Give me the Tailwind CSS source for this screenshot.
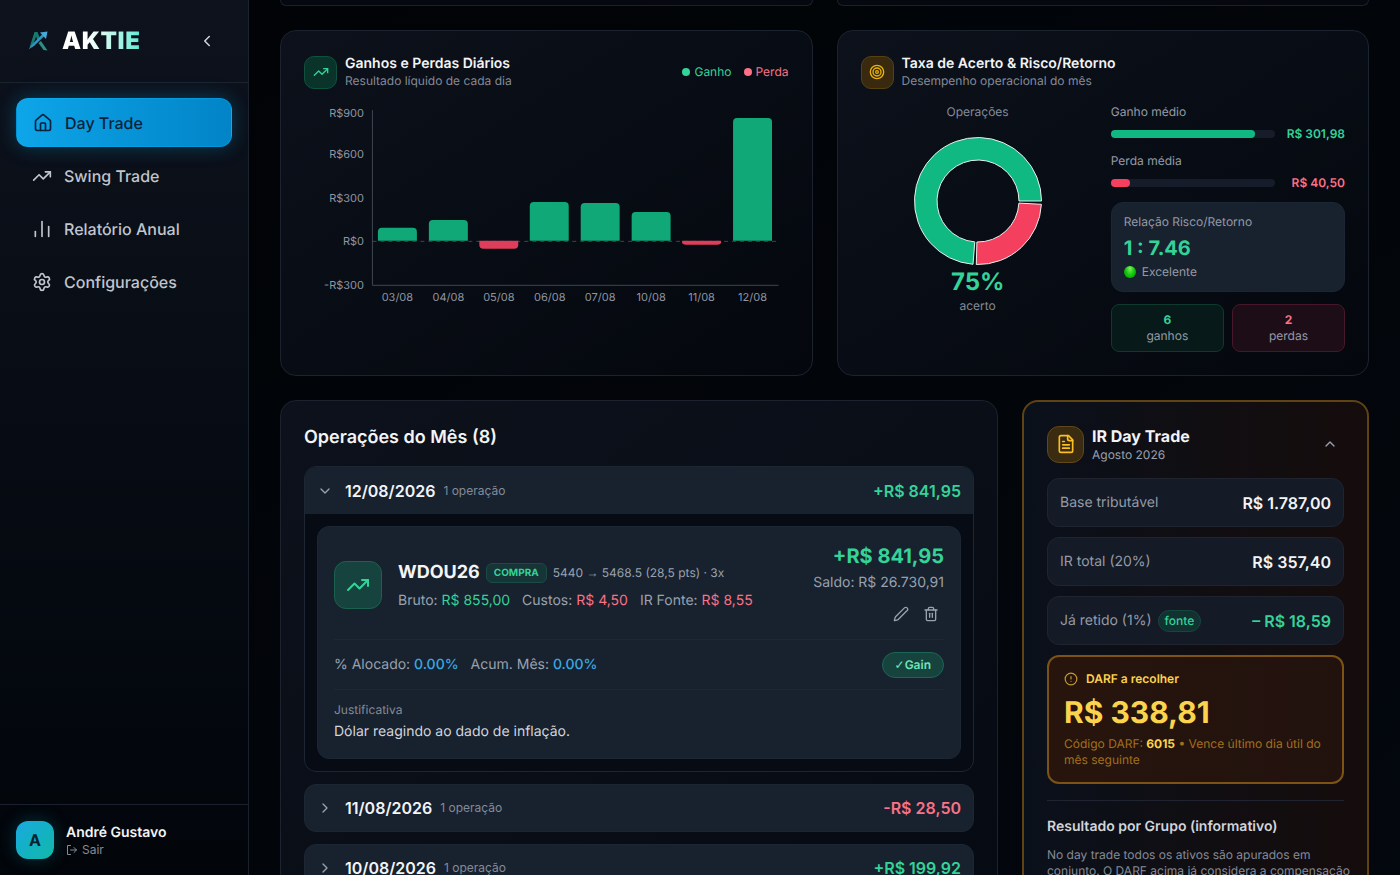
<!DOCTYPE html>
<html lang="pt-BR">
<head>
    <meta charset="UTF-8">
    <meta name="viewport" content="width=device-width, initial-scale=1.0">
    <title>AKTIE - Day Trade</title>
    <script src="https://cdn.jsdelivr.net/npm/@tailwindcss/browser@4"></script>
</head>
<body class="h-screen flex overflow-hidden bg-[#02050a] bg-linear-to-br from-[#010306] via-[#020509] to-[#03070e] font-[Inter,'Liberation_Sans',sans-serif] [text-rendering:geometricPrecision] text-gray-100">
    <!-- Sidebar -->
    <aside class="w-[249px] shrink-0 flex flex-col border-r border-[#1b222d] bg-linear-to-b from-[#0d121c] via-[#070c14] to-[#02050a]">
        <div class="h-[83px] flex items-center justify-between border-b border-[#1b232e] pl-7 pr-8">
            <div class="flex items-center gap-3">
                <svg class="w-[22px] h-[22px]" viewBox="0 0 22 22" fill="none">
                    <path d="M1.500 17.500 6.500 2 9.500 2 12 8.500 9.800 11 8 6.500 4.500 17Z" fill="#147a72"/>
                    <path d="M13 11 19.500 20.500 15.500 20 10.500 13Z" fill="#2a8f84"/>
                    <path d="M.5 19.500 4.500 14 14.500 4 16.500 6 6.500 15.500Z" fill="#2f95bd"/>
                    <path d="M12 2.500 19.500 1.500 18 9Z" fill="#45aadb"/>
                </svg>
                <span class="text-2xl font-black tracking-wide bg-linear-to-r from-white from-30% to-[#5eead4] bg-clip-text text-transparent">AKTIE</span>
            </div>
            <button type="button" aria-label="Recolher menu" class="text-gray-300">
                <svg class="w-[18px] h-[18px]" viewBox="0 0 24 24" fill="none" stroke="currentColor" stroke-width="2" stroke-linecap="round" stroke-linejoin="round"><path d="m15 18-6-6 6-6"/></svg>
            </button>
        </div>

        <nav class="flex-1 flex flex-col gap-1 px-4 pt-[15px]">
            <a href="#" class="h-[49px] flex items-center gap-3 rounded-xl px-4 font-medium text-[#06223c] bg-linear-to-r from-[#0ea5e9] to-[#0284c7] border border-sky-400/30 shadow-[0_0_20px_rgba(14,165,233,0.3)]">
                <svg class="w-5 h-5" viewBox="0 0 24 24" fill="none" stroke="currentColor" stroke-width="2" stroke-linecap="round" stroke-linejoin="round"><path d="M15 21v-8a1 1 0 0 0-1-1h-4a1 1 0 0 0-1 1v8"/><path d="M3 10a2 2 0 0 1 .709-1.528l7-5.999a2 2 0 0 1 2.582 0l7 5.999A2 2 0 0 1 21 10v9a2 2 0 0 1-2 2H5a2 2 0 0 1-2-2z"/></svg>
                Day Trade
            </a>
            <a href="#" class="h-[49px] flex items-center gap-3 rounded-xl px-4 font-medium text-[#c0c5ce]">
                <svg class="w-5 h-5" viewBox="0 0 24 24" fill="none" stroke="currentColor" stroke-width="2" stroke-linecap="round" stroke-linejoin="round"><path d="M22 7 13.500 15.500 8.500 10.500 2 17"/><path d="M16 7h6v6"/></svg>
                Swing Trade
            </a>
            <a href="#" class="h-[49px] flex items-center gap-3 rounded-xl px-4 font-medium text-[#c0c5ce]">
                <svg class="w-5 h-5" viewBox="0 0 24 24" fill="none" stroke="currentColor" stroke-width="2" stroke-linecap="round" stroke-linejoin="round"><path d="M4 21v-6"/><path d="M12 21V3"/><path d="M20 21V9"/></svg>
                Relatório Anual
            </a>
            <a href="#" class="h-[49px] flex items-center gap-3 rounded-xl px-4 font-medium text-[#c0c5ce]">
                <svg class="w-5 h-5" viewBox="0 0 24 24" fill="none" stroke="currentColor" stroke-width="2" stroke-linecap="round" stroke-linejoin="round"><path d="M9.671 4.136a2.340 2.340 0 0 1 4.659 0 2.340 2.340 0 0 0 3.319 1.915 2.340 2.340 0 0 1 2.330 4.033 2.340 2.340 0 0 0 0 3.831 2.340 2.340 0 0 1-2.330 4.033 2.340 2.340 0 0 0-3.319 1.915 2.340 2.340 0 0 1-4.659 0 2.340 2.340 0 0 0-3.320-1.915 2.340 2.340 0 0 1-2.330-4.033 2.340 2.340 0 0 0 0-3.831A2.340 2.340 0 0 1 6.350 6.051a2.340 2.340 0 0 0 3.319-1.915"/><circle cx="12" cy="12" r="3"/></svg>
                Configurações
            </a>
        </nav>

        <div class="h-[71px] flex items-center gap-3 border-t border-[#1b222d] px-4">
            <div class="w-[38px] h-[38px] rounded-xl flex items-center justify-center font-bold text-[#06222f] bg-linear-to-br from-[#1ba9e0] to-[#14b8a6] shadow-[0_0_18px_rgba(20,184,200,0.25)]">A</div>
            <div>
                <p class="text-sm leading-[19px] font-semibold text-gray-100">André Gustavo</p>
                <button type="button" class="flex items-center gap-1 text-xs text-[#848b98]">
                    <svg class="w-3 h-3" viewBox="0 0 24 24" fill="none" stroke="currentColor" stroke-width="2" stroke-linecap="round" stroke-linejoin="round"><path d="m16 17 5-5-5-5"/><path d="M21 12H9"/><path d="M9 21H3V3h6"/></svg>
                    Sair
                </button>
            </div>
        </div>
    </aside>

    <!-- Content -->
    <main class="flex-1 min-w-0 overflow-hidden px-[31px]">
        <div class="grid grid-cols-2 gap-6 mb-6">
            <div class="h-[6px] rounded-b-2xl border border-t-0 border-[#1a212c] bg-[#05090f]"></div>
            <div class="h-[6px] rounded-b-2xl border border-t-0 border-[#1a212c] bg-[#05090f]"></div>
        </div>

        <div class="grid grid-cols-2 gap-6 mb-6">
            <!-- Daily gains and losses -->
            <section class="rounded-2xl border border-[#1c232e] bg-linear-to-br from-[#0c111b] via-[#080c14] to-[#04070d] p-[23px] pt-6">
                <div class="flex items-center justify-between">
                    <div class="flex items-center gap-2">
                        <div class="w-[33px] h-[33px] rounded-[10px] border border-[#10513f] bg-[#0a3429] flex items-center justify-center text-[#34d399]">
                            <svg class="w-4 h-4" viewBox="0 0 24 24" fill="none" stroke="currentColor" stroke-width="2" stroke-linecap="round" stroke-linejoin="round"><path d="M22 7 13.500 15.500 8.500 10.500 2 17"/><path d="M16 7h6v6"/></svg>
                        </div>
                        <div>
                            <h2 class="text-sm leading-[18px] font-semibold">Ganhos e Perdas Diários</h2>
                            <p class="text-xs text-[#848b98]">Resultado líquido de cada dia</p>
                        </div>
                    </div>
                    <div class="flex gap-3 text-xs">
                        <span class="flex items-center gap-1 text-[#34d399]"><span class="w-2 h-2 rounded-full bg-[#34d399]"></span>Ganho</span>
                        <span class="flex items-center gap-1 text-[#fb7185]"><span class="w-2 h-2 rounded-full bg-[#fb7185]"></span>Perda</span>
                    </div>
                </div>
                <svg class="w-full mt-[15px]" viewBox="0 0 485 206" font-size="11" fill="#8f96a3">
                    <g text-anchor="end">
                        <text x="60" y="13">R$900</text>
                        <text x="60" y="54">R$600</text>
                        <text x="60" y="98">R$300</text>
                        <text x="60" y="141">R$0</text>
                        <text x="60" y="185">-R$300</text>
                    </g>
                    <g text-anchor="middle">
                        <text x="93.500" y="197">03/08</text>
                        <text x="144.500" y="197">04/08</text>
                        <text x="195" y="197">05/08</text>
                        <text x="246" y="197">06/08</text>
                        <text x="296.500" y="197">07/08</text>
                        <text x="347.500" y="197">10/08</text>
                        <text x="398" y="197">11/08</text>
                        <text x="449" y="197">12/08</text>
                    </g>
                    <path d="M68.500 6V181.500H475" fill="none" stroke="#3f4650"/>
                    <g fill="#10a877">
                        <path d="M74 137v-9q0-4 4-4h31q4 0 4 4v9z"/>
                        <path d="M125 137v-17q0-4 4-4h31q4 0 4 4v17z"/>
                        <path d="M226 137v-35q0-4 4-4h31q4 0 4 4v35z"/>
                        <path d="M277 137v-34q0-4 4-4h31q4 0 4 4v34z"/>
                        <path d="M328 137v-25q0-4 4-4h31q4 0 4 4v25z"/>
                        <path d="M429.500 137v-119q0-4 4-4h31q4 0 4 4v119z"/>
                    </g>
                    <g fill="#de3d5b">
                        <path d="M175.500 137h39v4q0 4-4 4h-31q-4 0-4-4z"/>
                        <path d="M378.500 137h39v1.500q0 2.500-4 2.500h-31q-4 0-4-2.500z"/>
                    </g>
                    <path d="M68.500 137.500H475" fill="none" stroke="#6b7280" stroke-opacity=".55" stroke-dasharray="4 4"/>
                </svg>
            </section>

            <!-- Hit rate -->
            <section class="rounded-2xl border border-[#1c232e] bg-linear-to-br from-[#0c111b] via-[#080c14] to-[#04070d] p-[23px] pt-6">
                <div class="flex items-center gap-2 mb-[15px]">
                    <div class="w-[33px] h-[33px] rounded-[10px] border border-[#57410f] bg-[#392a0f] flex items-center justify-center text-[#eab308]">
                        <svg class="w-4 h-4" viewBox="0 0 24 24" fill="none" stroke="currentColor" stroke-width="2"><circle cx="12" cy="12" r="10"/><circle cx="12" cy="12" r="6"/><circle cx="12" cy="12" r="2"/></svg>
                    </div>
                    <div>
                        <h2 class="text-sm leading-[18px] font-semibold">Taxa de Acerto &amp; Risco/Retorno</h2>
                        <p class="text-xs text-[#848b98]">Desempenho operacional do mês</p>
                    </div>
                </div>
                <div class="grid grid-cols-2 gap-4">
                    <div class="flex flex-col items-center text-xs text-[#848b98]">
                        <p>Operações</p>
                        <svg class="w-[130px] h-[130px] mt-4" viewBox="0 0 130 130" stroke="#e8f0ee" stroke-width="1">
                            <path fill="#10b981" d="M128.500 65A63.500 63.500 0 1 0 60 128.300L61.800 105.900A41 41 0 1 1 106 65Z"/>
                            <path fill="#f43f5e" d="M63.300 128.500A63.500 63.500 0 0 0 128.400 68.300L105.900 67.100A41 41 0 0 1 63.900 106Z"/>
                        </svg>
                        <p class="text-2xl font-bold text-[#34d399]">75%</p>
                        <p>acerto</p>
                    </div>
                    <div class="text-xs text-[#949ba7]">
                        <p class="mb-1.5">Ganho médio</p>
                        <div class="flex items-center justify-between mb-[11px]">
                            <div class="h-2 w-[164px] rounded-full bg-[#171c2a]"><div class="h-2 rounded-full bg-[#10b981]" style="width:88%"></div></div>
                            <span class="font-semibold text-[#34d399]">R$ 301,98</span>
                        </div>
                        <p class="mb-1.5">Perda média</p>
                        <div class="flex items-center justify-between mb-[11px]">
                            <div class="h-2 w-[164px] rounded-full bg-[#171c2a]"><div class="h-2 rounded-full bg-[#f43f5e]" style="width:12%"></div></div>
                            <span class="font-semibold text-[#fb7185]">R$ 40,50</span>
                        </div>
                        <div class="rounded-xl border border-[#1c2634] bg-[#18212e] px-3 py-[11px] mb-3">
                            <p>Relação Risco/Retorno</p>
                            <p class="text-xl font-bold text-[#34d399] mt-1">1 : 7.46</p>
                            <p class="flex items-center gap-1.5 mt-0.5"><span class="w-3 h-3 rounded-full bg-radial-[at_50%_20%] from-[#7cf35a] via-[#12c70c] to-[#068a06]"></span>Excelente</p>
                        </div>
                        <div class="grid grid-cols-2 gap-2 text-center">
                            <div class="rounded-lg border border-[#0e3a2e] bg-[#071a19] py-[7px]"><p class="font-bold text-[#34d399]">6</p><p>ganhos</p></div>
                            <div class="rounded-lg border border-[#46182a] bg-[#1d0d17] py-[7px]"><p class="font-bold text-[#fb7185]">2</p><p>perdas</p></div>
                        </div>
                    </div>
                </div>
            </section>
        </div>

        <div class="grid grid-cols-3 gap-6">
            <!-- Operations of the month -->
            <section class="col-span-2 rounded-2xl border border-[#1c232e] bg-linear-to-br from-[#0c111b] via-[#090e17] to-[#060a12] p-[23px] pt-6">
                <h2 class="text-lg leading-[26px] font-semibold mb-[15px]">Operações do Mês (8)</h2>

                <div class="rounded-xl border border-[#1d2632] bg-[#070b13] overflow-hidden mb-3">
                    <button type="button" class="w-full h-[47px] flex items-center px-3 bg-[#18212e] text-left">
                        <svg class="w-4 h-4 text-gray-400" viewBox="0 0 24 24" fill="none" stroke="currentColor" stroke-width="2" stroke-linecap="round" stroke-linejoin="round"><path d="m6 9 6 6 6-6"/></svg>
                        <span class="ml-3 font-semibold">12/08/2026</span>
                        <span class="ml-2 text-xs text-[#848b98]">1 operação</span>
                        <span class="ml-auto font-semibold text-[#34d399]">+R$ 841,95</span>
                    </button>
                    <div class="p-3">
                        <article class="rounded-xl border border-[#1d2734] bg-[#18212e] p-4 pt-[15px]">
                            <div class="flex items-center gap-4">
                                <div class="w-12 h-12 rounded-xl border border-[#1a614f] bg-[#17433f] flex items-center justify-center text-[#34d399]">
                                    <svg class="w-6 h-6" viewBox="0 0 24 24" fill="none" stroke="currentColor" stroke-width="2" stroke-linecap="round" stroke-linejoin="round"><path d="M22 7 13.500 15.500 8.500 10.500 2 17"/><path d="M16 7h6v6"/></svg>
                                </div>
                                <div>
                                    <div class="flex items-center gap-1.5">
                                        <h3 class="text-lg font-bold">WDOU26</h3>
                                        <span class="rounded-md border border-[#1a4c46] bg-[#173437] px-[7px] py-0.5 text-[10px] leading-[14px] font-bold text-[#34d399]">COMPRA</span>
                                        <span class="text-xs text-gray-400">5440 <span class="font-['Liberation_Sans',sans-serif]">→</span> 5468.5 (28,5 pts) · 3x</span>
                                    </div>
                                    <div class="flex gap-3 text-sm text-gray-400 mt-1">
                                        <span>Bruto: <span class="text-[#34d399]">R$ 855,00</span></span>
                                        <span>Custos: <span class="text-[#fb7185]">R$ 4,50</span></span>
                                        <span>IR Fonte: <span class="text-[#fb7185]">R$ 8,55</span></span>
                                    </div>
                                </div>
                                <div class="ml-auto text-right">
                                    <p class="text-xl font-bold text-[#34d399]">+R$ 841,95</p>
                                    <p class="text-sm text-gray-400 mt-[3px]">Saldo: R$ 26.730,91</p>
                                    <div class="flex justify-end gap-1 mt-2 text-gray-400">
                                        <button type="button" aria-label="Editar" class="w-[26px] h-[26px] flex items-center justify-center">
                                            <svg class="w-4 h-4" viewBox="0 0 24 24" fill="none" stroke="currentColor" stroke-width="2" stroke-linecap="round" stroke-linejoin="round"><path d="M21.174 6.812a1 1 0 0 0-3.986-3.987L3.842 16.174a2 2 0 0 0-.500.830l-1.321 4.352a.500.500 0 0 0 .623.622l4.353-1.320a2 2 0 0 0 .830-.497z"/></svg>
                                        </button>
                                        <button type="button" aria-label="Excluir" class="w-[26px] h-[26px] flex items-center justify-center">
                                            <svg class="w-4 h-4" viewBox="0 0 24 24" fill="none" stroke="currentColor" stroke-width="2" stroke-linecap="round" stroke-linejoin="round"><path d="M3 6h18"/><path d="M19 6v14a2 2 0 0 1-2 2H7a2 2 0 0 1-2-2V6"/><path d="M8 6V4a2 2 0 0 1 2-2h4a2 2 0 0 1 2 2v2"/><path d="M10 11v6"/><path d="M14 11v6"/></svg>
                                        </button>
                                    </div>
                                </div>
                            </div>
                            <div class="flex items-center gap-3 border-t border-[#1e2835] mt-3 pt-3 text-sm text-gray-400">
                                <span>% Alocado: <span class="font-medium text-[#38a9e0]">0.00%</span></span>
                                <span>Acum. Mês: <span class="font-medium text-[#38a9e0]">0.00%</span></span>
                                <span class="ml-auto rounded-full border border-[#1b6655] bg-[#17433f] px-3 py-1 text-xs font-semibold text-[#6ee7b7]"><span class="font-['DejaVu_Sans',sans-serif]">✓</span>Gain</span>
                            </div>
                            <div class="border-t border-[#1e2835] mt-[11px] pt-3">
                                <p class="text-xs text-[#848b98] mb-1">Justificativa</p>
                                <p class="text-sm text-gray-300">Dólar reagindo ao dado de inflação.</p>
                            </div>
                        </article>
                    </div>
                </div>

                <button type="button" class="w-full h-12 flex items-center rounded-xl border border-[#1d2632] px-3 bg-[#18212e] text-left mb-3">
                    <svg class="w-4 h-4 text-gray-400" viewBox="0 0 24 24" fill="none" stroke="currentColor" stroke-width="2" stroke-linecap="round" stroke-linejoin="round"><path d="m9 18 6-6-6-6"/></svg>
                    <span class="ml-3 font-semibold">11/08/2026</span>
                    <span class="ml-2 text-xs text-[#848b98]">1 operação</span>
                    <span class="ml-auto font-semibold text-[#fb7185]">-R$ 28,50</span>
                </button>
                <button type="button" class="w-full h-12 flex items-center rounded-xl border border-[#1d2632] px-3 bg-[#18212e] text-left mb-3">
                    <svg class="w-4 h-4 text-gray-400" viewBox="0 0 24 24" fill="none" stroke="currentColor" stroke-width="2" stroke-linecap="round" stroke-linejoin="round"><path d="m9 18 6-6-6-6"/></svg>
                    <span class="ml-3 font-semibold">10/08/2026</span>
                    <span class="ml-2 text-xs text-[#848b98]">1 operação</span>
                    <span class="ml-auto font-semibold text-[#34d399]">+R$ 199,92</span>
                </button>
            </section>

            <!-- Income tax -->
            <section class="rounded-2xl border-2 border-[#5f4313] bg-linear-to-r from-[#0a101b] via-[#100e12] to-[#150c0c] p-[23px]">
                <div class="flex items-center gap-2 mb-[15px]">
                    <div class="w-[37px] h-[37px] rounded-xl border border-[#60481a] bg-[#3b2b11] flex items-center justify-center text-[#fbbf24]">
                        <svg class="w-5 h-5" viewBox="0 0 24 24" fill="none" stroke="currentColor" stroke-width="2" stroke-linecap="round" stroke-linejoin="round"><path d="M15 2H6a2 2 0 0 0-2 2v16a2 2 0 0 0 2 2h12a2 2 0 0 0 2-2V7Z"/><path d="M14 2v4a2 2 0 0 0 2 2h4"/><path d="M10 9H8"/><path d="M16 13H8"/><path d="M16 17H8"/></svg>
                    </div>
                    <div>
                        <h2 class="leading-[22px] font-bold">IR Day Trade</h2>
                        <p class="text-xs text-gray-400">Agosto 2026</p>
                    </div>
                    <button type="button" aria-label="Recolher" class="ml-auto mr-1.5 text-gray-400">
                        <svg class="w-4 h-4" viewBox="0 0 24 24" fill="none" stroke="currentColor" stroke-width="2" stroke-linecap="round" stroke-linejoin="round"><path d="m18 15-6-6-6 6"/></svg>
                    </button>
                </div>
                <div class="flex flex-col gap-2.5 text-sm text-[#949ba7]">
                    <div class="h-[49px] flex items-center justify-between rounded-xl border border-[#20242e] bg-[#141a26] px-3">
                        <span>Base tributável</span><span class="text-base font-semibold text-gray-100">R$ 1.787,00</span>
                    </div>
                    <div class="h-[49px] flex items-center justify-between rounded-xl border border-[#20242e] bg-[#141a26] px-3">
                        <span>IR total (20%)</span><span class="text-base font-semibold text-gray-100">R$ 357,40</span>
                    </div>
                    <div class="h-[49px] flex items-center justify-between rounded-xl border border-[#20242e] bg-[#141a26] px-3">
                        <span class="flex items-center gap-1.5">Já retido (1%) <span class="rounded-full border border-[#17463e] bg-[#123131] px-1.5 py-0.5 text-xs font-medium text-[#34d399]">fonte</span></span>
                        <span class="text-base font-semibold text-[#34d399]">– R$ 18,59</span>
                    </div>
                    <div class="rounded-xl border-2 border-[#7c5314] bg-linear-to-r from-[#27150d] to-[#22120e] px-[15px] py-3.5 text-xs text-[#a36f1c]">
                        <p class="flex items-center gap-2 font-semibold text-[#fcd34d]">
                            <svg class="w-3.5 h-3.5 text-[#c69a34]" viewBox="0 0 24 24" fill="none" stroke="currentColor" stroke-width="2" stroke-linecap="round"><circle cx="12" cy="12" r="10"/><path d="M12 8v4"/><path d="M12 16h.01"/></svg>
                            DARF a recolher
                        </p>
                        <p class="text-3xl font-bold text-[#fcd34d] mt-2 mb-[5px]">R$ 338,81</p>
                        <p>Código DARF: <b class="font-bold text-[#fcd34d]">6015</b> • Vence último dia útil do mês seguinte</p>
                    </div>
                </div>
                <div class="border-t border-[#1f2430] mt-4 pt-4">
                    <h3 class="text-sm font-semibold text-gray-300 mb-2.5">Resultado por Grupo (informativo)</h3>
                    <p class="-mr-3 text-xs text-[#848b98]">No day trade todos os ativos são apurados em conjunto. O DARF acima já considera a compensação de perdas.</p>
                </div>
            </section>
        </div>
    </main>
</body>
</html>
